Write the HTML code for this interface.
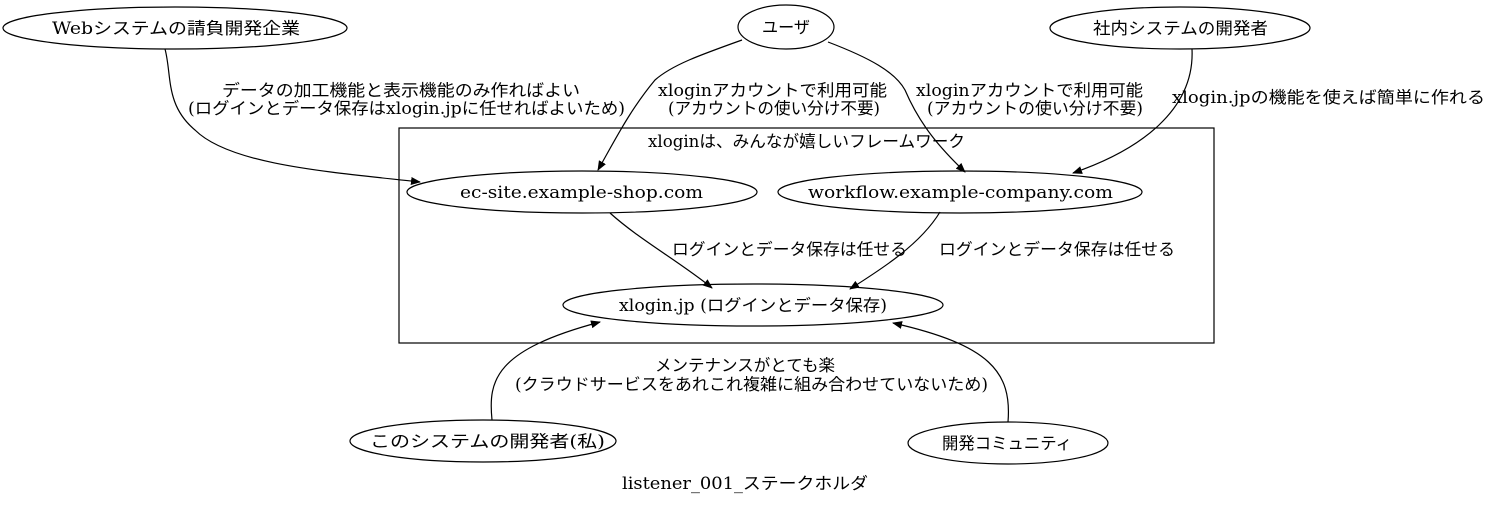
<!DOCTYPE html>
<html><head><meta charset="utf-8"><style>
html,body{margin:0;padding:0;background:#fff;}
svg text{font-family:"DejaVu Serif","Noto Sans CJK JP",serif;font-size:16.5px;fill:#000;}
</style></head><body>
<svg width="1491" height="505" viewBox="0 0 1491 505" xmlns="http://www.w3.org/2000/svg">
<defs><marker id="a" markerWidth="10" markerHeight="8" refX="9" refY="4" orient="auto" markerUnits="userSpaceOnUse"><path d="M0,0 L10,4 L0,8 z" fill="#000"/></marker></defs>
<g fill="none" stroke="#000" stroke-width="1.2">
<rect x="399" y="128" width="815" height="215"/>
<ellipse cx="175" cy="28" rx="172" ry="21"/>
<ellipse cx="786" cy="27" rx="48" ry="22"/>
<ellipse cx="1180" cy="28" rx="130" ry="21"/>
<ellipse cx="582" cy="192" rx="175" ry="21"/>
<ellipse cx="960" cy="192" rx="182" ry="21"/>
<ellipse cx="753" cy="305" rx="190" ry="21"/>
<ellipse cx="483" cy="441" rx="133" ry="21"/>
<ellipse cx="1008" cy="443" rx="100" ry="21"/>
<path d="M165,49 C172,75 165,105 195,130 C230,165 330,172 420,182" marker-end="url(#a)"/>
<path d="M742,40 C700,55 672,65 655,80 C630,110 615,140 598,170" marker-end="url(#a)"/>
<path d="M828,42 C870,58 895,72 905,90 C920,125 940,148 965,172" marker-end="url(#a)"/>
<path d="M1192,49 C1195,110 1140,150 1073,173" marker-end="url(#a)"/>
<path d="M610,213 C640,240 680,262 712,288" marker-end="url(#a)"/>
<path d="M940,212 C920,245 880,270 850,289" marker-end="url(#a)"/>
<path d="M492,420 C488,380 495,350 600,322" marker-end="url(#a)"/>
<path d="M1008,422 C1012,372 990,345 893,323" marker-end="url(#a)"/>
</g>
<text x="52" y="34" textLength="248" lengthAdjust="spacingAndGlyphs">Webシステムの請負開発企業</text>
<text x="762" y="33" textLength="48" lengthAdjust="spacingAndGlyphs">ユーザ</text>
<text x="1093" y="34" textLength="175" lengthAdjust="spacingAndGlyphs">社内システムの開発者</text>
<text x="460" y="198" textLength="243" lengthAdjust="spacingAndGlyphs">ec-site.example-shop.com</text>
<text x="808" y="198" textLength="305" lengthAdjust="spacingAndGlyphs">workflow.example-company.com</text>
<text x="619" y="311" textLength="268" lengthAdjust="spacingAndGlyphs">xlogin.jp (ログインとデータ保存)</text>
<text x="370" y="447" textLength="235" lengthAdjust="spacingAndGlyphs">このシステムの開発者(私)</text>
<text x="942" y="449" textLength="130" lengthAdjust="spacingAndGlyphs">開発コミュニティ</text>
<text x="648" y="147" textLength="317" lengthAdjust="spacingAndGlyphs">xloginは、みんなが嬉しいフレームワーク</text>
<text x="622" y="489" textLength="246" lengthAdjust="spacingAndGlyphs">listener_001_ステークホルダ</text>
<text x="222" y="96" textLength="358" lengthAdjust="spacingAndGlyphs">データの加工機能と表示機能のみ作ればよい</text>
<text x="188" y="114" textLength="437" lengthAdjust="spacingAndGlyphs">(ログインとデータ保存はxlogin.jpに任せればよいため)</text>
<text x="658" y="96" textLength="229" lengthAdjust="spacingAndGlyphs">xloginアカウントで利用可能</text>
<text x="668" y="114" textLength="212" lengthAdjust="spacingAndGlyphs">(アカウントの使い分け不要)</text>
<text x="916" y="96" textLength="227" lengthAdjust="spacingAndGlyphs">xloginアカウントで利用可能</text>
<text x="927" y="114" textLength="216" lengthAdjust="spacingAndGlyphs">(アカウントの使い分け不要)</text>
<text x="1172" y="103" textLength="313" lengthAdjust="spacingAndGlyphs">xlogin.jpの機能を使えば簡単に作れる</text>
<text x="672" y="255" textLength="235" lengthAdjust="spacingAndGlyphs">ログインとデータ保存は任せる</text>
<text x="939" y="255" textLength="236" lengthAdjust="spacingAndGlyphs">ログインとデータ保存は任せる</text>
<text x="655" y="371" textLength="180" lengthAdjust="spacingAndGlyphs">メンテナンスがとても楽</text>
<text x="515" y="390" textLength="473" lengthAdjust="spacingAndGlyphs">(クラウドサービスをあれこれ複雑に組み合わせていないため)</text>
</svg>
</body></html>
